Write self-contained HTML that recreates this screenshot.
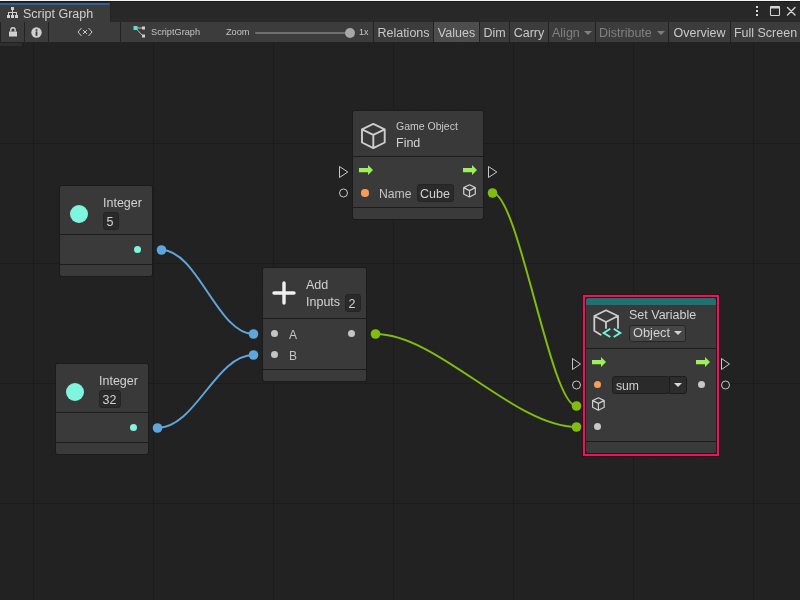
<!DOCTYPE html>
<html><head><meta charset="utf-8">
<style>
*{box-sizing:border-box;margin:0;padding:0}
html,body{-webkit-font-smoothing:antialiased;width:800px;height:600px;overflow:hidden;background:#212121;font-family:"Liberation Sans",sans-serif;color:#c4c4c4}
.a{position:absolute}
body>*{will-change:transform}
#grid{position:absolute;left:0;top:42px;width:800px;height:558px;
 background-color:#222222;
 background-image:
  linear-gradient(to right,#1c1c1c 0,#1c1c1c 1px,transparent 1px),
  linear-gradient(to bottom,#1c1c1c 0,#1c1c1c 1px,transparent 1px),
  linear-gradient(to right,#212121 0,#212121 1px,transparent 1px),
  linear-gradient(to bottom,#212121 0,#212121 1px,transparent 1px);
 background-size:120px 120px,120px 120px,12px 12px,12px 12px;
 background-position:33px 101px,33px 101px,9px 5px,9px 5px;
}
.tb{position:absolute;top:22px;height:20px;background:#3c3c3c;font-size:12.5px;line-height:22px;color:#c8c8c8;text-align:center}
.node{position:absolute;background:#3a3a3a;border-radius:2px;box-shadow:0 0 0 1px #1b1b1b}
.hd{position:absolute;left:0;right:0;top:0;background:#393939;border-radius:2px 2px 0 0}
.dv{position:absolute;left:0;right:0;height:1px;background:#1c1c1c}
.ttl{position:absolute;font-size:12.5px;color:#d2d2d2;white-space:nowrap;line-height:14px}
.vbox{position:absolute;background:#2a2a2a;border:1px solid #242424;border-radius:3px;font-size:12.5px;color:#d2d2d2;line-height:15px;padding-top:1.5px;padding-left:2.5px;text-align:left}
.lbl{position:absolute;font-size:12px;color:#c4c4c4;white-space:nowrap;line-height:14px}
</style></head><body>
<!-- window tab bar -->
<div class="a" style="left:0;top:0;width:800px;height:22px;background:#282828"></div>
<div class="a" style="left:0;top:0;width:800px;height:1px;background:#f4f4f4"></div>
<div class="a" style="left:0;top:1px;width:800px;height:1px;background:#1a1a1a"></div>
<div class="a" style="left:0;top:2px;width:110px;height:20px;background:#3c3c3c"></div>
<div class="a" style="left:0;top:2px;width:110px;height:1px;background:#242424"></div>
<div class="a" style="left:0;top:3px;width:110px;height:2px;background:#2d6399;border-radius:0 1.5px 1.5px 0"></div>
<div class="a" style="left:110px;top:2px;width:1px;height:20px;background:#232323"></div>
<svg class="a" style="left:7px;top:7px" width="11" height="11" viewBox="0 0 11 11">
 <g fill="#d0d0d0"><rect x="4" y="0" width="3" height="3"/><rect x="0" y="8" width="3" height="3"/><rect x="4" y="8" width="3" height="3"/><rect x="8" y="8" width="3" height="3"/>
 <rect x="5" y="3" width="1" height="2"/><rect x="1" y="5" width="9" height="1"/><rect x="1" y="5" width="1" height="3"/><rect x="5" y="5" width="1" height="3"/><rect x="9" y="5" width="1" height="3"/></g>
</svg>
<div class="a" style="left:23.3px;top:5.7px;font-size:12.5px;line-height:16px;color:#d0d0d0">Script Graph</div>
<!-- window controls -->
<svg class="a" style="left:750px;top:4px" width="50" height="16" viewBox="0 0 50 16">
 <g fill="#d8d8d8"><rect x="6" y="2" width="2" height="2"/><rect x="6" y="6" width="2" height="2"/><rect x="6" y="10" width="2" height="2"/></g>
 <rect x="20.5" y="2.5" width="9" height="9" rx="0.8" fill="none" stroke="#d4d4d4" stroke-width="1.1"/>
 <rect x="20.5" y="2.5" width="9" height="2" fill="#d4d4d4"/>
 <path d="M37.5 3.5 L45 11 M45 3.5 L37.5 11" stroke="#d4d4d4" stroke-width="1.4" stroke-linecap="round"/>
</svg>
<!-- toolbar -->
<div class="a" style="left:0;top:22px;width:800px;height:20px;background:#232323"></div>
<div class="tb" style="left:1px;width:23px"></div>
<svg class="a" style="left:9px;top:27px" width="8" height="10" viewBox="0 0 8 10"><path d="M1.8 4.5 V3 A2.2 2.2 0 0 1 6.2 3 V4.5" fill="none" stroke="#cfcfcf" stroke-width="1.4"/><rect x="0" y="4.5" width="8" height="5" fill="#cfcfcf"/></svg>
<div class="tb" style="left:25px;width:23px"></div>
<svg class="a" style="left:31px;top:26.5px" width="11" height="11" viewBox="0 0 11 11"><circle cx="5.5" cy="5.5" r="5.2" fill="#cfcfcf"/><rect x="4.6" y="4.4" width="1.8" height="4.4" fill="#3c3c3c"/><rect x="4.6" y="2.2" width="1.8" height="1.6" fill="#3c3c3c"/></svg>
<div class="tb" style="left:49px;width:71px"></div>
<svg class="a" style="left:77px;top:27px" width="16" height="10" viewBox="0 0 16 10"><path d="M4.5 1 L1 5 L4.5 9 M11.5 1 L15 5 L11.5 9 M6 3 L10 7 M10 3 L6 7" fill="none" stroke="#c8c8c8" stroke-width="1"/></svg>
<div class="tb" style="left:121px;width:252px"></div>
<svg class="a" style="left:133px;top:25px" width="14" height="14" viewBox="0 0 14 14"><path d="M2.5 3 L10 3 M2.5 3 L10 11" stroke="#bdbdbd" stroke-width="1"/><rect x="0.5" y="1" width="4" height="4" fill="#60e0c8"/><rect x="9" y="1.5" width="3" height="3" fill="#cfcfcf"/><rect x="9" y="9.5" width="3" height="3" fill="#cfcfcf"/></svg>
<div class="a" style="left:151px;top:25px;font-size:9.2px;line-height:14px;color:#c4c4c4">ScriptGraph</div>
<div class="a" style="left:226px;top:24.5px;font-size:9.2px;line-height:14px;color:#c4c4c4">Zoom</div>
<div class="a" style="left:255px;top:32px;width:95px;height:2px;background:#707070;border-radius:1px"></div>
<div class="a" style="left:345px;top:28px;width:10px;height:10px;background:#a8a8a8;border-radius:50%"></div>
<div class="a" style="left:359px;top:25px;font-size:9px;line-height:14px;color:#c4c4c4">1x</div>
<div class="tb" style="left:374px;width:59px">Relations</div>
<div class="tb" style="left:434px;width:45px;background:#4d4d4d">Values</div>
<div class="tb" style="left:480px;width:29px">Dim</div>
<div class="tb" style="left:510px;width:38px">Carry</div>
<div class="tb" style="left:549px;width:46px;color:#808080;text-align:left;padding-left:3px">Align<span style="position:absolute;left:35px;top:9px;width:0;height:0;border-left:4px solid transparent;border-right:4px solid transparent;border-top:4px solid #808080"></span></div>
<div class="tb" style="left:596px;width:72px;color:#808080;text-align:left;padding-left:3px">Distribute<span style="position:absolute;left:61px;top:9px;width:0;height:0;border-left:4px solid transparent;border-right:4px solid transparent;border-top:4px solid #808080"></span></div>
<div class="tb" style="left:669px;width:61px">Overview</div>
<div class="tb" style="left:731px;width:69px">Full Screen</div>
<!-- graph -->
<div id="grid"></div>
<div class="a" style="left:0;top:43px;width:23px;height:3px;background:#2f2f2f;border-right:1px solid #1b1b1b;border-radius:0 1px 1px 0"></div>

<!-- connections -->
<svg class="a" style="left:0;top:0" width="800" height="600" viewBox="0 0 800 600">
 <g fill="none" stroke-width="2">
  <path d="M161.5 250 C 197.5 250, 217.5 334, 253.5 334" stroke="#5ea6dc"/>
  <path d="M157.5 428 C 195.5 428, 215.5 355, 253.5 355" stroke="#5ea6dc"/>
  <path d="M375.5 334 C 437.5 334, 514.5 427, 576.5 427" stroke="#80bd0c"/>
  <path d="M492.5 193 C 518.5 193, 550.5 406, 576.5 406" stroke="#80bd0c"/>
 </g>
 <g fill="#5ea6dc"><circle cx="161.5" cy="250" r="4.8"/><circle cx="157.5" cy="428" r="4.8"/><circle cx="253.5" cy="334" r="4.8"/><circle cx="253.5" cy="355" r="4.8"/></g>
 <g fill="#80bd0c"><circle cx="375.5" cy="334" r="4.8"/><circle cx="492.5" cy="193" r="4.8"/><circle cx="576.5" cy="427" r="4.8"/><circle cx="576.5" cy="406" r="4.8"/></g>
</svg>

<!-- Integer 5 -->
<div class="node" style="left:60px;top:186px;width:92px;height:90px">
 <div class="hd" style="height:48px"></div>
 <div class="dv" style="top:48px"></div>
 <div class="dv" style="top:78px"></div>
 <div class="a" style="left:9.8px;top:18.8px;width:18.5px;height:18.5px;border-radius:50%;background:#7ef5de;box-shadow:0 0 0.5px 0.5px rgba(90,60,50,0.5)"></div>
 <div class="ttl" style="left:43px;top:10px">Integer</div>
 <div class="vbox" style="left:43px;top:26px;width:16px;height:18px">5</div>
 <div class="a" style="left:74px;top:60px;width:7px;height:7px;border-radius:50%;background:#7ef5de"></div>
</div>
<!-- Integer 32 -->
<div class="node" style="left:56px;top:364px;width:92px;height:90px">
 <div class="hd" style="height:48px"></div>
 <div class="dv" style="top:48px"></div>
 <div class="dv" style="top:78px"></div>
 <div class="a" style="left:9.8px;top:18.8px;width:18.5px;height:18.5px;border-radius:50%;background:#7ef5de;box-shadow:0 0 0.5px 0.5px rgba(90,60,50,0.5)"></div>
 <div class="ttl" style="left:43px;top:10px">Integer</div>
 <div class="vbox" style="left:43px;top:26px;width:22px;height:18px">32</div>
 <div class="a" style="left:74px;top:60px;width:7px;height:7px;border-radius:50%;background:#7ef5de"></div>
</div>
<!-- Add -->
<div class="node" style="left:263px;top:268px;width:103px;height:113px">
 <div class="hd" style="height:50px"></div>
 <div class="dv" style="top:50px"></div>
 <div class="dv" style="top:101px"></div>
 <svg class="a" style="left:9px;top:13px" width="24" height="24" viewBox="0 0 24 24"><path d="M12 2 V22 M2 12 H22" stroke="#f0f0f0" stroke-width="3.4" stroke-linecap="round"/></svg>
 <div class="ttl" style="left:43px;top:10px">Add</div>
 <div class="ttl" style="left:43px;top:27px">Inputs</div>
 <div class="vbox" style="left:82px;top:26px;width:16px;height:18px">2</div>
 <div class="a" style="left:8px;top:62px;width:7px;height:7px;border-radius:50%;background:#c4c4c4"></div>
 <div class="a" style="left:8px;top:83px;width:7px;height:7px;border-radius:50%;background:#c4c4c4"></div>
 <div class="lbl" style="left:26px;top:59.5px">A</div>
 <div class="lbl" style="left:26px;top:80.5px">B</div>
 <div class="a" style="left:85px;top:62px;width:7px;height:7px;border-radius:50%;background:#c4c4c4"></div>
</div>
<!-- Game Object Find -->
<div class="node" style="left:353px;top:111px;width:130px;height:108px">
 <div class="hd" style="height:45px"></div>
 <div class="dv" style="top:45px"></div>
 <div class="dv" style="top:96px"></div>
 <svg class="a" style="left:6px;top:10px" width="30" height="30" viewBox="0 0 30 30"><path d="M14.3 2.9 L25.7 8.3 V21.5 L14.3 27.1 L3 21.5 V8.3 Z M3 8.3 L14.3 13.8 L25.7 8.3 M14.3 13.8 V27.1" fill="none" stroke="#cdcdcd" stroke-width="1.9" stroke-linejoin="round"/></svg>
 <div class="a" style="left:43px;top:9px;font-size:10.5px;color:#c8c8c8;line-height:12px;white-space:nowrap">Game Object</div>
 <div class="ttl" style="left:43px;top:25.2px">Find</div>
 <svg class="a" style="left:6px;top:54px" width="15" height="11" viewBox="0 0 15 11"><path d="M0 3 H9 V0 L14 5 L9 10 V7.3 H0 Z" fill="#9df05a"/></svg>
 <svg class="a" style="left:110px;top:54px" width="15" height="11" viewBox="0 0 15 11"><path d="M0 3 H9 V0 L14 5 L9 10 V7.3 H0 Z" fill="#9df05a"/></svg>
 <div class="a" style="left:8px;top:78px;width:7.5px;height:7.5px;border-radius:50%;background:#f89c58"></div>
 <div class="lbl" style="left:26px;top:76px;font-size:12.2px">Name</div>
 <div class="vbox" style="left:64px;top:73px;width:37px;height:18px;padding-left:2px">Cube</div>
 <svg class="a" style="left:108px;top:71px" width="18" height="18" viewBox="0 0 18 18"><path d="M8.5 2.8 L14.3 5.6 V12 L8.5 15 L2.7 12 V5.6 Z M2.7 5.6 L8.5 8.6 L14.3 5.6 M8.5 8.6 V15" fill="none" stroke="#cdcdcd" stroke-width="1.2" stroke-linejoin="round"/></svg>
</div>
<!-- Find ports outside -->
<svg class="a" style="left:330px;top:150px" width="180" height="60" viewBox="0 0 180 60">
 <path d="M9.5 16.5 L17.8 22 L9.5 27.5 Z" fill="none" stroke="#c8c8c8" stroke-width="1"/>
 <circle cx="13.5" cy="43" r="4" fill="none" stroke="#c8c8c8" stroke-width="1"/>
 <path d="M158.5 16.5 L166.8 22 L158.5 27.5 Z" fill="none" stroke="#c8c8c8" stroke-width="1"/>
</svg>

<!-- Set Variable -->
<div class="a" style="left:582px;top:294px;width:138px;height:163px;border:1px solid #141a18"></div>
<div class="a" style="left:583px;top:295px;width:136px;height:161px;border:2px solid #ff0a5e"></div>
<div class="a" style="left:585px;top:297px;width:132px;height:157px;background:#161a19"></div>
<div class="node" style="left:586px;top:298px;width:130px;height:155px">
 <div class="hd" style="height:50px"></div>
 <div class="a" style="left:0;top:0;width:130px;height:7px;background:#1f7272;border-radius:3px 3px 0 0"></div>
 <div class="dv" style="top:50px"></div>
 <div class="dv" style="top:143px"></div>
 <svg class="a" style="left:2px;top:8px" width="40" height="40" viewBox="0 0 40 40"><path d="M12.7 28.7 L6.3 24.7 V10 L18 4.3 L30 10 V22 M6.3 10 L18 16 L30 10 M18 16 V22" fill="none" stroke="#cdcdcd" stroke-width="1.8" stroke-linejoin="round" stroke-linecap="round"/><path d="M22.3 22.7 L15.7 27 L22.3 31 M25.7 22.7 L32.3 27 L25.7 31" fill="none" stroke="#6ff5e0" stroke-width="1.9"/></svg>
 <div class="ttl" style="left:43px;top:10px">Set Variable</div>
 <div class="a" style="left:43px;top:26.5px;width:57px;height:17px;background:#464646;border:1px solid #262626;border-radius:3px;font-size:12.8px;line-height:14px;color:#d2d2d2;padding-left:3px">Object<span style="position:absolute;left:43.5px;top:5px;width:0;height:0;border-left:4px solid transparent;border-right:4px solid transparent;border-top:4px solid #d2d2d2"></span></div>
 <svg class="a" style="left:6px;top:59px" width="15" height="11" viewBox="0 0 15 11"><path d="M0 3 H9 V0 L14 5 L9 10 V7.3 H0 Z" fill="#9df05a"/></svg>
 <svg class="a" style="left:110px;top:59px" width="15" height="11" viewBox="0 0 15 11"><path d="M0 3 H9 V0 L14 5 L9 10 V7.3 H0 Z" fill="#9df05a"/></svg>
 <div class="a" style="left:8px;top:83px;width:7px;height:7px;border-radius:50%;background:#f89c58"></div>
 <div class="a" style="left:26px;top:78px;width:58px;height:18px;background:#2a2a2a;border:1px solid #1f1f1f;border-radius:3px;font-size:12.2px;line-height:16px;padding-top:1px;color:#d2d2d2;padding-left:3px">sum</div>
 <div class="a" style="left:83px;top:78px;width:18px;height:18px;background:#2d2d2d;border:1px solid #1c1c1c;border-radius:0 3px 3px 0"><span style="position:absolute;left:4px;top:6px;width:0;height:0;border-left:4.5px solid transparent;border-right:4.5px solid transparent;border-top:4.5px solid #d8d8d8"></span></div>
 <div class="a" style="left:112px;top:83px;width:7px;height:7px;border-radius:50%;background:#c8c8c8"></div>
 <svg class="a" style="left:4px;top:96px" width="18" height="18" viewBox="0 0 18 18"><path d="M8.4 3.8 L14.2 6.6 V13.2 L8.4 16.2 L2.6 13.2 V6.6 Z M2.6 6.6 L8.4 9.4 L14.2 6.6 M8.4 9.4 V16.2" fill="none" stroke="#cdcdcd" stroke-width="1.2" stroke-linejoin="round"/></svg>
 <div class="a" style="left:8px;top:125px;width:7px;height:7px;border-radius:50%;background:#c8c8c8"></div>
</div>
<svg class="a" style="left:560px;top:350px" width="180" height="50" viewBox="0 0 180 50">
 <path d="M12.5 8.5 L20.5 14 L12.5 19.5 Z" fill="none" stroke="#c8c8c8" stroke-width="1"/>
 <circle cx="16.5" cy="35" r="4" fill="none" stroke="#c8c8c8" stroke-width="1"/>
 <path d="M161.5 8.5 L169.5 14 L161.5 19.5 Z" fill="none" stroke="#c8c8c8" stroke-width="1"/>
 <circle cx="165.5" cy="35" r="4" fill="none" stroke="#c8c8c8" stroke-width="1"/>
</svg>
</body></html>
